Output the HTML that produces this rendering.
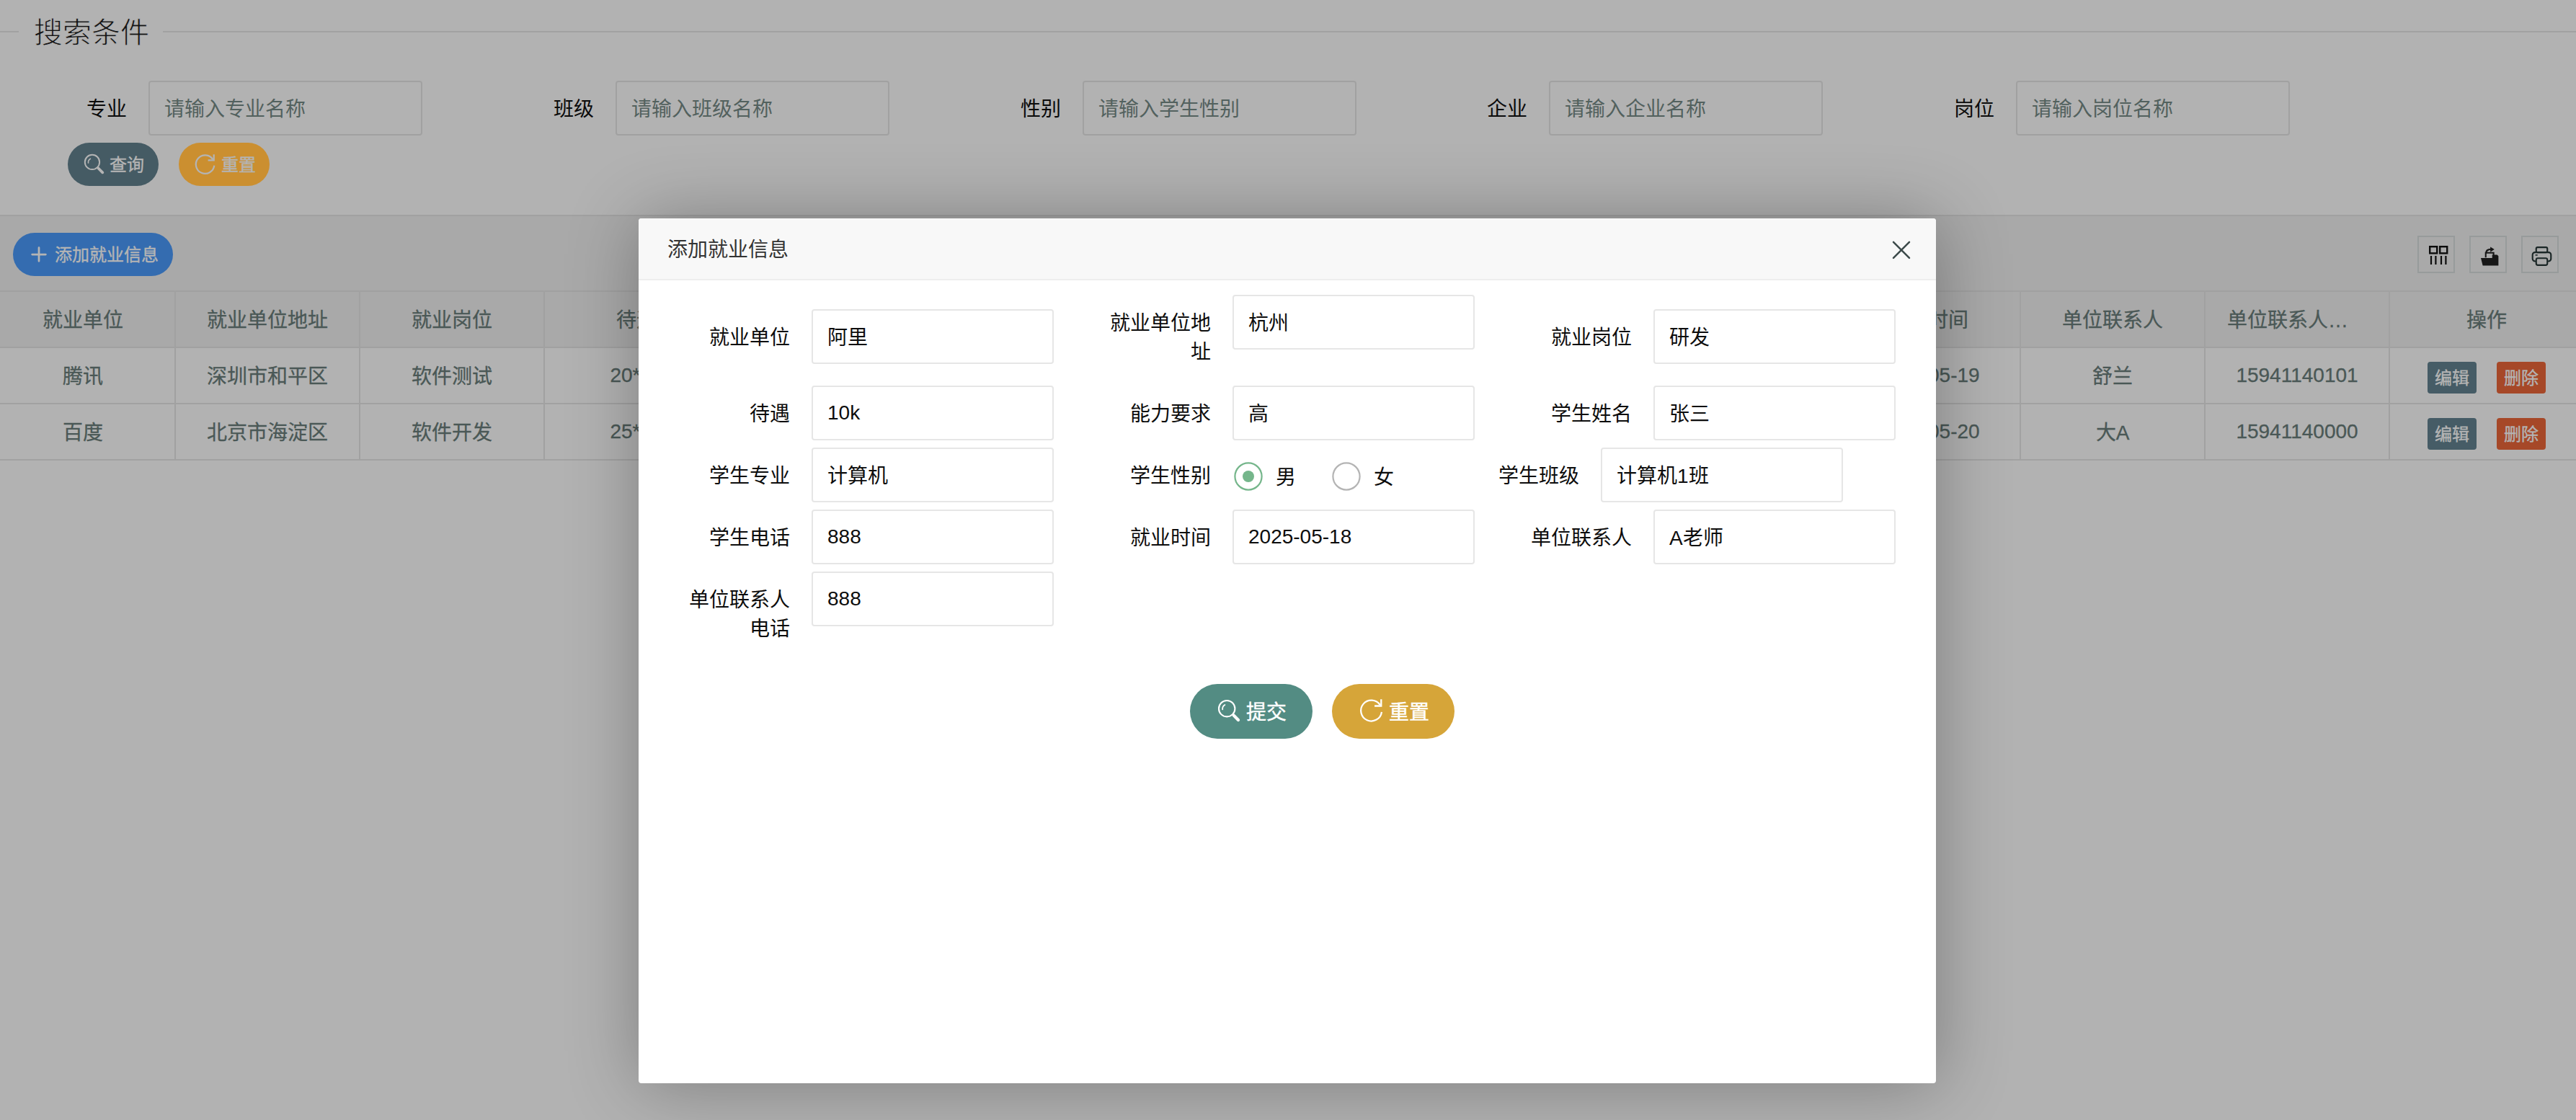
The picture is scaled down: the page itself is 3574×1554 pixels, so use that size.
<!DOCTYPE html>
<html lang="zh-CN"><head><meta charset="utf-8"><title>就业信息管理</title>
<style>
*{box-sizing:border-box;margin:0;padding:0}
html{zoom:2}
@media (max-width:2400px){html{zoom:1}}
html,body{width:1787px;height:777px;overflow:hidden;background:#b2b2b2}
body{font-family:"Liberation Sans",sans-serif;font-size:14px;color:#111;position:relative}
.a{position:absolute}
.ln{position:absolute;background:#a1a1a1}
.legend{left:23.5px;top:10.5px;font-size:20px;line-height:24px;font-weight:300;color:#141414;white-space:nowrap;-webkit-text-stroke:0.45px #b2b2b2}
.slab{width:110px;height:38px;line-height:38px;padding-right:15px;padding-top:1px;text-align:right;color:#0b0b0b;top:56px;white-space:nowrap}
.sinp{width:190px;height:38px;top:56px;border:1px solid #a1a1a1;border-radius:2px;line-height:36px;padding-left:10px;padding-top:1px;color:#52615e;white-space:nowrap}
.btn{position:absolute;border-radius:100px;color:#b4b4b4;white-space:nowrap}
.btn svg{position:absolute}
.btn span{position:absolute;-webkit-text-stroke:0.2px}
.sm{height:30px}.sm span{font-size:12px;line-height:30px;top:0.5px}
.lg{height:38px;color:#fff}.lg span{font-size:14px;line-height:38px;top:1px}
.th,.td{-webkit-text-stroke:0.15px;position:absolute;width:127px;height:38px;line-height:38px;text-align:center;color:#4a5856;white-space:nowrap;overflow:hidden}
.tool{position:absolute;top:163.5px;width:26px;height:26px;border:1px solid #979b9b}
.tool svg{position:absolute}
.xs{-webkit-text-stroke:0.2px;position:absolute;height:22px;width:34px;border-radius:2px;font-size:12px;line-height:23px;text-align:center;color:#b4b4b4}
.modal{left:443px;top:151.5px;width:900px;height:600px;background:#fff;border-radius:2px;box-shadow:1px 1px 50px rgba(0,0,0,.3)}
.mtitle{left:0;top:0;width:900px;height:43px;background:#f8f8f8;border-bottom:1px solid #eee;border-radius:2px 2px 0 0;line-height:44px;padding-left:20px;color:#333;white-space:nowrap}
.flab{width:110px;padding:10px 15px 8px 15px;line-height:20px;text-align:right;color:#0d0d0d}
.finp{width:168px;height:38px;border:1px solid #e6e6e6;border-radius:2px;line-height:36px;padding-left:10px;color:#0d0d0d;white-space:nowrap;background:#fff}
.rtxt{line-height:30px;color:#0d0d0d}
</style></head>
<body>
<div class="ln" style="left:0;top:21.5px;width:13px;height:1px"></div>
<div class="ln" style="left:113px;top:21.5px;width:1674px;height:1px"></div>
<div class="a legend">搜索条件</div>
<div class="a slab" style="left:-7px">专业</div>
<div class="a sinp" style="left:103px">请输入专业名称</div>
<div class="a slab" style="left:317px">班级</div>
<div class="a sinp" style="left:427px">请输入班级名称</div>
<div class="a slab" style="left:641px">性别</div>
<div class="a sinp" style="left:751px">请输入学生性别</div>
<div class="a slab" style="left:964.5px">企业</div>
<div class="a sinp" style="left:1074.5px">请输入企业名称</div>
<div class="a slab" style="left:1288.5px">岗位</div>
<div class="a sinp" style="left:1398.5px">请输入岗位名称</div>
<div class="btn sm" style="left:47px;top:99px;width:63px;background:#455b64"><svg class="a" style="left:11px;top:7.5px" width="14.5" height="14.5" viewBox="0 0 16 16" fill="none" stroke="#b4b4b4" stroke-width="1.1" stroke-linecap="round"><circle cx="6.6" cy="6.6" r="5.6"/><path d="M3.6 7.2a3.2 3.2 0 0 1 1.6-3.2" stroke-width="0.9"/><path d="M11.3 11.3l3.2 3.2" stroke-width="2.1"/></svg><span style="left:29px">查询</span></div>
<div class="btn sm" style="left:124px;top:99px;width:63px;background:#cb8f30"><svg class="a" style="left:10.5px;top:7.5px" width="15.5" height="15.5" viewBox="0 0 16 16" fill="none" stroke="#b4b4b4" stroke-width="1.15" stroke-linecap="butt"><path d="M13.6 4.2A6.6 6.6 0 1 0 14.6 8.6"/><path d="M14.3 0.6v4.2h-4.2" stroke-linejoin="miter"/></svg><span style="left:29.5px">重置</span></div>
<div class="a" style="left:0;top:150px;width:1787px;height:90.5px;background:#a9a9a9"></div>
<div class="ln" style="left:0;top:149px;width:1787px;height:1px"></div>
<div class="ln" style="left:0;top:201.5px;width:1787px;height:1px"></div>
<div class="ln" style="left:0;top:240.5px;width:1787px;height:1px"></div>
<div class="ln" style="left:0;top:279.5px;width:1787px;height:1px"></div>
<div class="ln" style="left:0;top:318.5px;width:1787px;height:1px"></div>
<div class="ln" style="left:121px;top:202.5px;width:1px;height:117px"></div>
<div class="ln" style="left:249px;top:202.5px;width:1px;height:117px"></div>
<div class="ln" style="left:377px;top:202.5px;width:1px;height:117px"></div>
<div class="ln" style="left:505px;top:202.5px;width:1px;height:117px"></div>
<div class="ln" style="left:633px;top:202.5px;width:1px;height:117px"></div>
<div class="ln" style="left:761px;top:202.5px;width:1px;height:117px"></div>
<div class="ln" style="left:889px;top:202.5px;width:1px;height:117px"></div>
<div class="ln" style="left:1017px;top:202.5px;width:1px;height:117px"></div>
<div class="ln" style="left:1145px;top:202.5px;width:1px;height:117px"></div>
<div class="ln" style="left:1273px;top:202.5px;width:1px;height:117px"></div>
<div class="ln" style="left:1401px;top:202.5px;width:1px;height:117px"></div>
<div class="ln" style="left:1529px;top:202.5px;width:1px;height:117px"></div>
<div class="ln" style="left:1657px;top:202.5px;width:1px;height:117px"></div>
<div class="btn sm" style="left:9px;top:161.5px;width:111px;background:#346cb0"><svg class="a" style="left:12.5px;top:9.5px" width="11" height="11" viewBox="0 0 12 12" fill="none" stroke="#b4b4b4" stroke-width="1.5" stroke-linecap="round"><path d="M6 0.9v10.2M0.9 6h10.2"/></svg><span style="left:29px">添加就业信息</span></div>
<div class="tool" style="left:1677px"><svg style="left:5.5px;top:4.5px" width="16" height="16" viewBox="0 0 16 16" fill="none" stroke="#0c0c0c" stroke-width="1.2"><rect x="2.1" y="2.1" width="5" height="4.6"/><rect x="9.1" y="2.1" width="5" height="4.6"/><path d="M3 8.5v6M6.2 8.5v6M10 8.5v6M13.2 8.5v6" stroke-width="1.1"/></svg></div>
<div class="tool" style="left:1713px"><svg style="left:5.5px;top:6px" width="15" height="15" viewBox="0 0 16 16"><path d="M1.6 9h9.6l-1 5.6H3z M10 9V6.6h3.6l1 1V14.6h-4.4" fill="#161616"/><path d="M5.2 8.6V5.2h5.8v3.4" fill="none" stroke="#161616" stroke-width="1.1"/><path d="M5.4 5.6c0-2 1.4-3 3.6-3" fill="none" stroke="#161616" stroke-width="1.3"/><path d="M8.6 0.8l3 1.9-3 1.9z" fill="#161616"/></svg></div>
<div class="tool" style="left:1749px"><svg style="left:5.5px;top:5.5px" width="15.5" height="15.5" viewBox="0 0 16 16" fill="none" stroke="#1a2626" stroke-width="1.1"><rect x="4" y="1.6" width="8" height="3.6" rx="1"/><rect x="1.4" y="5.2" width="13.2" height="6.4" rx="1.8"/><rect x="4" y="9.4" width="8" height="5" rx="1.2" fill="#a9a9a9"/><path d="M3.4 7.2h1.6" stroke-width="0.8"/></svg></div>
<div class="th" style="left:-6px;top:202.5px;padding-top:1px">就业单位</div>
<div class="th" style="left:122px;top:202.5px;padding-top:1px">就业单位地址</div>
<div class="th" style="left:250px;top:202.5px;padding-top:1px">就业岗位</div>
<div class="th" style="left:378px;top:202.5px;padding-top:1px">待遇</div>
<div class="th" style="left:506px;top:202.5px;padding-top:1px">能力要求</div>
<div class="th" style="left:634px;top:202.5px;padding-top:1px">学生姓名</div>
<div class="th" style="left:762px;top:202.5px;padding-top:1px">学生专业</div>
<div class="th" style="left:890px;top:202.5px;padding-top:1px">学生性别</div>
<div class="th" style="left:1018px;top:202.5px;padding-top:1px">学生班级</div>
<div class="th" style="left:1146px;top:202.5px;padding-top:1px">学生电话</div>
<div class="th" style="left:1274px;top:202.5px;padding-top:1px">就业时间</div>
<div class="th" style="left:1402px;top:202.5px;padding-top:1px">单位联系人</div>
<div class="th" style="left:1530px;top:202.5px;text-align:left;padding-left:15px;padding-top:1px">单位联系人…</div>
<div class="th" style="left:1658px;top:202.5px;width:134px;padding-top:1px">操作</div>
<div class="td" style="left:-6px;top:241.5px;padding-top:1px">腾讯</div>
<div class="td" style="left:122px;top:241.5px;padding-top:1px">深圳市和平区</div>
<div class="td" style="left:250px;top:241.5px;padding-top:1px">软件测试</div>
<div class="td" style="left:378px;top:241.5px">20*14</div>
<div class="td" style="left:506px;top:241.5px;padding-top:1px">熟练</div>
<div class="td" style="left:634px;top:241.5px;padding-top:1px">舒克</div>
<div class="td" style="left:762px;top:241.5px;padding-top:1px">软件工程</div>
<div class="td" style="left:890px;top:241.5px;padding-top:1px">男</div>
<div class="td" style="left:1018px;top:241.5px;padding-top:1px">软件1班</div>
<div class="td" style="left:1146px;top:241.5px">13900000000</div>
<div class="td" style="left:1274px;top:241.5px">2025-05-19</div>
<div class="td" style="left:1402px;top:241.5px;padding-top:1px">舒兰</div>
<div class="td" style="left:1530px;top:241.5px">15941140101</div>
<div class="xs" style="left:1684px;top:251.0px;background:#465c66">编辑</div>
<div class="xs" style="left:1732px;top:251.0px;background:#a64828">删除</div>
<div class="td" style="left:-6px;top:280.5px;padding-top:1px">百度</div>
<div class="td" style="left:122px;top:280.5px;padding-top:1px">北京市海淀区</div>
<div class="td" style="left:250px;top:280.5px;padding-top:1px">软件开发</div>
<div class="td" style="left:378px;top:280.5px">25*14</div>
<div class="td" style="left:506px;top:280.5px;padding-top:1px">精通</div>
<div class="td" style="left:634px;top:280.5px;padding-top:1px">贝塔</div>
<div class="td" style="left:762px;top:280.5px;padding-top:1px">计算机</div>
<div class="td" style="left:890px;top:280.5px;padding-top:1px">女</div>
<div class="td" style="left:1018px;top:280.5px;padding-top:1px">计算机2班</div>
<div class="td" style="left:1146px;top:280.5px">13800000000</div>
<div class="td" style="left:1274px;top:280.5px">2025-05-20</div>
<div class="td" style="left:1402px;top:280.5px;padding-top:1px">大A</div>
<div class="td" style="left:1530px;top:280.5px">15941140000</div>
<div class="xs" style="left:1684px;top:290.0px;background:#465c66">编辑</div>
<div class="xs" style="left:1732px;top:290.0px;background:#a64828">删除</div>
<div class="a modal">
<div class="a mtitle">添加就业信息</div>
<svg class="a" style="left:869.5px;top:15.5px" width="13" height="13" viewBox="0 0 13 13" stroke="#3c4a4a" stroke-width="1.25" stroke-linecap="round"><path d="M1 0.9l11 11M12 0.9L1 11.9"/></svg>
<div class="a flab" style="left:10px;top:63.0px">就业单位</div>
<div class="a finp" style="left:120px;top:63.0px;padding-top:1px">阿里</div>
<div class="a flab" style="left:302px;top:53.0px">就业单位地<br>址</div>
<div class="a finp" style="left:412px;top:53.0px;padding-top:1px">杭州</div>
<div class="a flab" style="left:594px;top:63.0px">就业岗位</div>
<div class="a finp" style="left:704px;top:63.0px;padding-top:1px">研发</div>
<div class="a flab" style="left:10px;top:116.0px">待遇</div>
<div class="a finp" style="left:120px;top:116.0px">10k</div>
<div class="a flab" style="left:302px;top:116.0px">能力要求</div>
<div class="a finp" style="left:412px;top:116.0px;padding-top:1px">高</div>
<div class="a flab" style="left:594px;top:116.0px">学生姓名</div>
<div class="a finp" style="left:704px;top:116.0px;padding-top:1px">张三</div>
<div class="a flab" style="left:10px;top:159.0px">学生专业</div>
<div class="a finp" style="left:120px;top:159.0px;padding-top:1px">计算机</div>
<div class="a flab" style="left:302px;top:159.0px">学生性别</div>
<div class="a flab" style="left:557.5px;top:159.0px">学生班级</div>
<div class="a finp" style="left:667.5px;top:159.0px;padding-top:1px">计算机1班</div>
<div class="a flab" style="left:10px;top:202.0px">学生电话</div>
<div class="a finp" style="left:120px;top:202.0px">888</div>
<div class="a flab" style="left:302px;top:202.0px">就业时间</div>
<div class="a finp" style="left:412px;top:202.0px">2025-05-18</div>
<div class="a flab" style="left:594px;top:202.0px">单位联系人</div>
<div class="a finp" style="left:704px;top:202.0px;padding-top:1px">A老师</div>
<div class="a flab" style="left:10px;top:245.0px">单位联系人<br>电话</div>
<div class="a finp" style="left:120px;top:245.0px">888</div>
<svg class="a" style="left:413px;top:169.0px" width="20" height="20" viewBox="0 0 20 20"><circle cx="10" cy="10" r="9.3" fill="none" stroke="#75b68b" stroke-width="1.1"/><circle cx="10" cy="10" r="4" fill="#75b68b"/></svg>
<div class="a rtxt" style="left:442px;top:165.0px">男</div>
<svg class="a" style="left:481px;top:169.0px" width="20" height="20" viewBox="0 0 20 20"><circle cx="10" cy="10" r="9.3" fill="none" stroke="#b4b4b4" stroke-width="1.1"/></svg>
<div class="a rtxt" style="left:510px;top:165.0px">女</div>
<div class="btn lg" style="left:382.5px;top:323.0px;width:85px;background:#538c83"><svg class="a" style="left:19px;top:10.5px" width="16" height="16" viewBox="0 0 16 16" fill="none" stroke="#fff" stroke-width="1.05" stroke-linecap="round"><circle cx="6.6" cy="6.6" r="5.6"/><path d="M3.6 7.2a3.2 3.2 0 0 1 1.6-3.2" stroke-width="0.9"/><path d="M11.3 11.3l3.2 3.2" stroke-width="2.1"/></svg><span style="left:39px">提交</span></div>
<div class="btn lg" style="left:481px;top:323.0px;width:85px;background:#d6a539"><svg class="a" style="left:18.5px;top:10px" width="17.5" height="17.5" viewBox="0 0 16 16" fill="none" stroke="#fff" stroke-width="1.05" stroke-linecap="butt"><path d="M13.6 4.2A6.6 6.6 0 1 0 14.6 8.6"/><path d="M14.3 0.6v4.2h-4.2" stroke-linejoin="miter"/></svg><span style="left:39.5px">重置</span></div>
</div>
</body></html>
